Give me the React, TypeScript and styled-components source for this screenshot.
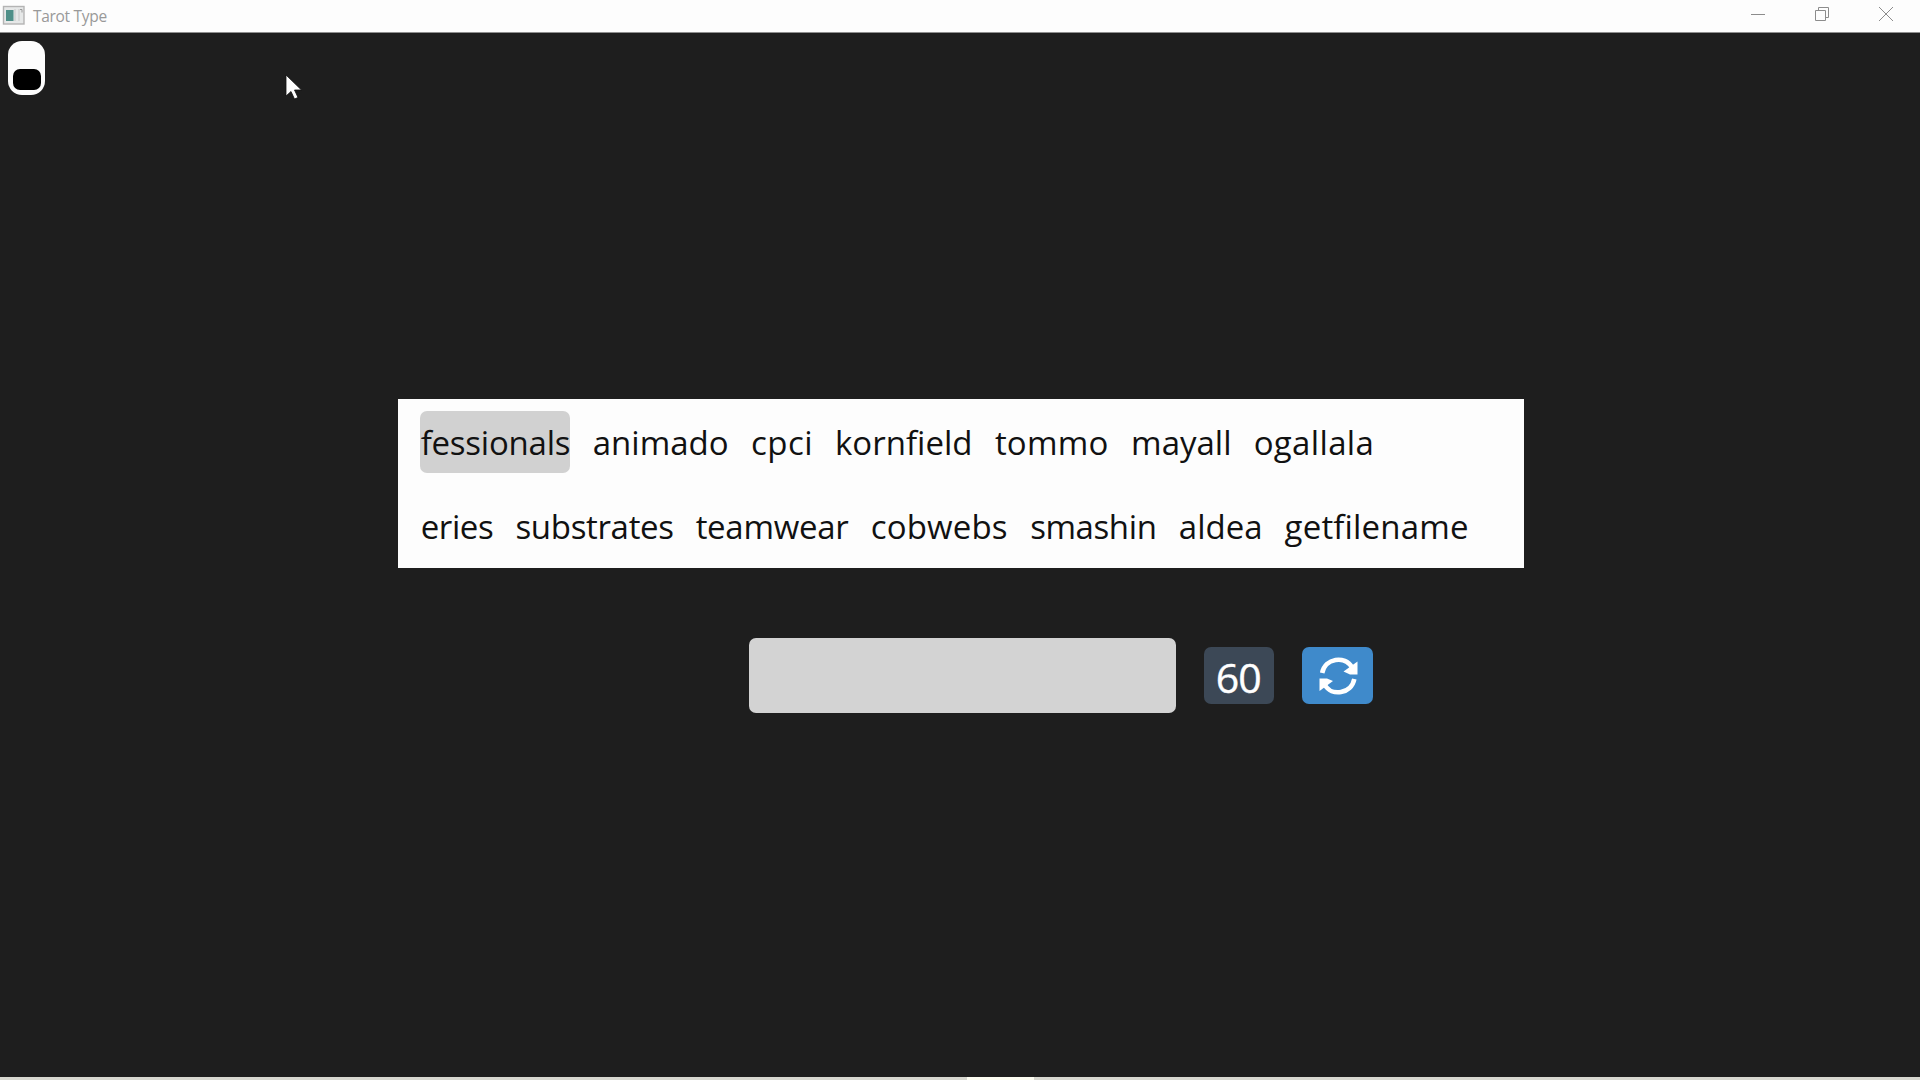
import React from "react";
import styled, { createGlobalStyle } from "styled-components";

const GlobalStyle = createGlobalStyle`
  * { box-sizing: border-box; }
  body {
    margin: 0;
    overflow: hidden;
    background: #1e1e1e;
    font-family: "Open Sans", "Noto Sans", sans-serif;
  }
`;

const Window = styled.div`
  position: relative;
  display: flex;
  flex-direction: column;
  width: 1920px;
  height: 1080px;
  background: #1e1e1e;
`;

const TitleBar = styled.header`
  display: flex;
  align-items: center;
  height: 33px;
  flex: none;
  padding: 0 2.5px 0 2px;
  border-bottom: 1px solid #8f8f8f;
  background: #fdfdfd;
`;

const AppIcon = styled.svg`
  display: block;
  width: 24px;
  height: 20px;
  margin-top: -2px;
`;

const Title = styled.span`
  flex: 1;
  margin-left: 7px;
  font-size: 15.5px;
  letter-spacing: -0.3px;
  line-height: 20px;
  color: #999;
`;

const Caption = styled.button`
  display: flex;
  align-items: center;
  justify-content: center;
  width: 64px;
  height: 28px;
  margin-bottom: 4px;
  padding: 0;
  border: 0;
  background: none;
`;

const Main = styled.main`
  flex: 1;
  display: flex;
  flex-direction: column;
`;

const Toggle = styled.button`
  display: flex;
  align-items: flex-end;
  width: 37px;
  height: 54px;
  margin: 7.5px 0 0 8px;
  padding: 4.5px;
  border: 0;
  border-radius: 14px;
  background: #fdfdfd;
`;

const Knob = styled.span`
  flex: 1;
  height: 21px;
  border-radius: 7px;
  background: #000;
`;

const Words = styled.section`
  display: flex;
  flex-direction: column;
  gap: 22px;
  width: 1125.5px;
  height: 169px;
  margin: 304.5px 0 0 398px;
  padding: 11.5px 22px 0;
  background: #fdfdfd;
`;

const Line = styled.div`
  display: flex;
  gap: 22.2px;
  height: 62px;
`;

const Word = styled.span<{ $width: number; $spacing: number; $active?: boolean }>`
  flex: none;
  width: ${(p) => p.$width}px;
  padding-left: 0.7px;
  border-radius: 7px;
  background: ${(p) => (p.$active ? "#d1d1d1" : "transparent")};
  color: #111;
  font-size: 33px;
  line-height: 64px;
  letter-spacing: ${(p) => p.$spacing}px;
  font-variant-ligatures: none;
  white-space: nowrap;
`;

const Controls = styled.section`
  display: flex;
  align-items: center;
  gap: 28px;
  margin: 70px 0 0 749px;
`;

const Entry = styled.input`
  width: 427px;
  height: 75px;
  padding: 0 16px;
  border: 0;
  border-radius: 7px;
  background: #d3d3d3;
  font-size: 33px;
  outline: none;
`;

const Timer = styled.div`
  width: 70px;
  height: 57px;
  padding-right: 1.5px;
  border-radius: 7px;
  background: #3c4856;
  color: #fff;
  font-size: 41px;
  line-height: 60px;
  letter-spacing: -0.9px;
  text-align: center;
  -webkit-text-stroke: 0.4px #fff;
`;

const Restart = styled.button`
  display: flex;
  align-items: center;
  justify-content: center;
  width: 71px;
  height: 57px;
  padding: 0;
  border: 0;
  border-radius: 7px;
  background: #3f8acb;
`;

const Taskbar = styled.footer`
  display: flex;
  justify-content: center;
  height: 3px;
  padding-left: 81px;
  flex: none;
  background: #d8d8d0;
`;

const TaskbarActive = styled.span`
  width: 67px;
  background: #fdfdf2;
`;

const Pointer = styled.svg`
  position: absolute;
  left: 285px;
  top: 74px;
`;

type WordSpec = [text: string, width: number, spacing: number];

const lines: WordSpec[][] = [
  [
    ["fessionals", 149.9, -0.23],
    ["animado", 136.1, 0],
    ["cpci", 61.8, 0.45],
    ["kornfield", 137.7, 0],
    ["tommo", 114, 0.2],
    ["mayall", 100.4, 0],
    ["ogallala", 120.8, 0.34],
  ],
  [
    ["eries", 72.6, -0.4],
    ["substrates", 158, -0.33],
    ["teamwear", 152.8, -0.3],
    ["cobwebs", 137.3, 0.18],
    ["smashin", 126.5, -0.4],
    ["aldea", 83.6, 0],
    ["getfilename", 184.3, 0.17],
  ],
];

export default function App() {
  return (
    <Window>
      <GlobalStyle />
      <TitleBar>
        <AppIcon viewBox="0 0 24 20">
          <rect x="1.500" y="1.500" width="20.500" height="17.500" fill="#e6e8e8" stroke="#b4b4b4" strokeWidth="1.400" />
          <rect x="4" y="5" width="7.500" height="11" fill="#4f8f88" />
          <path d="M13 4v12M17 4v12" stroke="#c8c8c8" />
          <path d="M18 4.500h2v3" stroke="#999" fill="none" />
        </AppIcon>
        <Title>Tarot Type</Title>
        <Caption aria-label="Minimize">
          <svg width="16" height="16"><path d="M1 8.500h14" stroke="#8c8c8c" /></svg>
        </Caption>
        <Caption aria-label="Restore">
          <svg width="16" height="16" fill="none" stroke="#8c8c8c">
            <path d="M1.500 4.500h10v10h-10zM4.500 4.500v-3h10v10h-3" />
          </svg>
        </Caption>
        <Caption aria-label="Close">
          <svg width="16" height="16"><path d="M1 1l14 14M15 1L1 15" stroke="#8c8c8c" /></svg>
        </Caption>
      </TitleBar>
      <Main>
        <Toggle aria-label="Theme"><Knob /></Toggle>
        <Words>
          {lines.map((line, row) => (
            <Line key={row}>
              {line.map(([text, width, spacing], i) => (
                <Word key={text} $width={width} $spacing={spacing} $active={row === 0 && i === 0}>
                  {text}
                </Word>
              ))}
            </Line>
          ))}
        </Words>
        <Controls>
          <Entry aria-label="Type here" />
          <Timer>60</Timer>
          <Restart aria-label="Restart">
            <svg width="40" height="38" viewBox="0 0 40 38" fill="none" stroke="#fff" strokeWidth="4.600">
              <path d="M4.200 16C7 1 27 -2 34 10.500" />
              <path d="M39.500 4.500v13H32L25.500 14.500z" fill="#fff" stroke="none" />
              <path d="M36.300 22C33.500 37 13.500 40 6.500 27.500" />
              <path d="M1.500 34V21.500H9L15 24z" fill="#fff" stroke="none" />
            </svg>
          </Restart>
        </Controls>
      </Main>
      <Taskbar><TaskbarActive /></Taskbar>
      <Pointer width="20" height="28" viewBox="0 0 20 28">
        <path d="M1 1v21l5-4.500 3.500 7.500 3.500-1.500-3.500-7.500h7z" fill="#fff" stroke="#111" strokeWidth=".8" />
      </Pointer>
    </Window>
  );
}
